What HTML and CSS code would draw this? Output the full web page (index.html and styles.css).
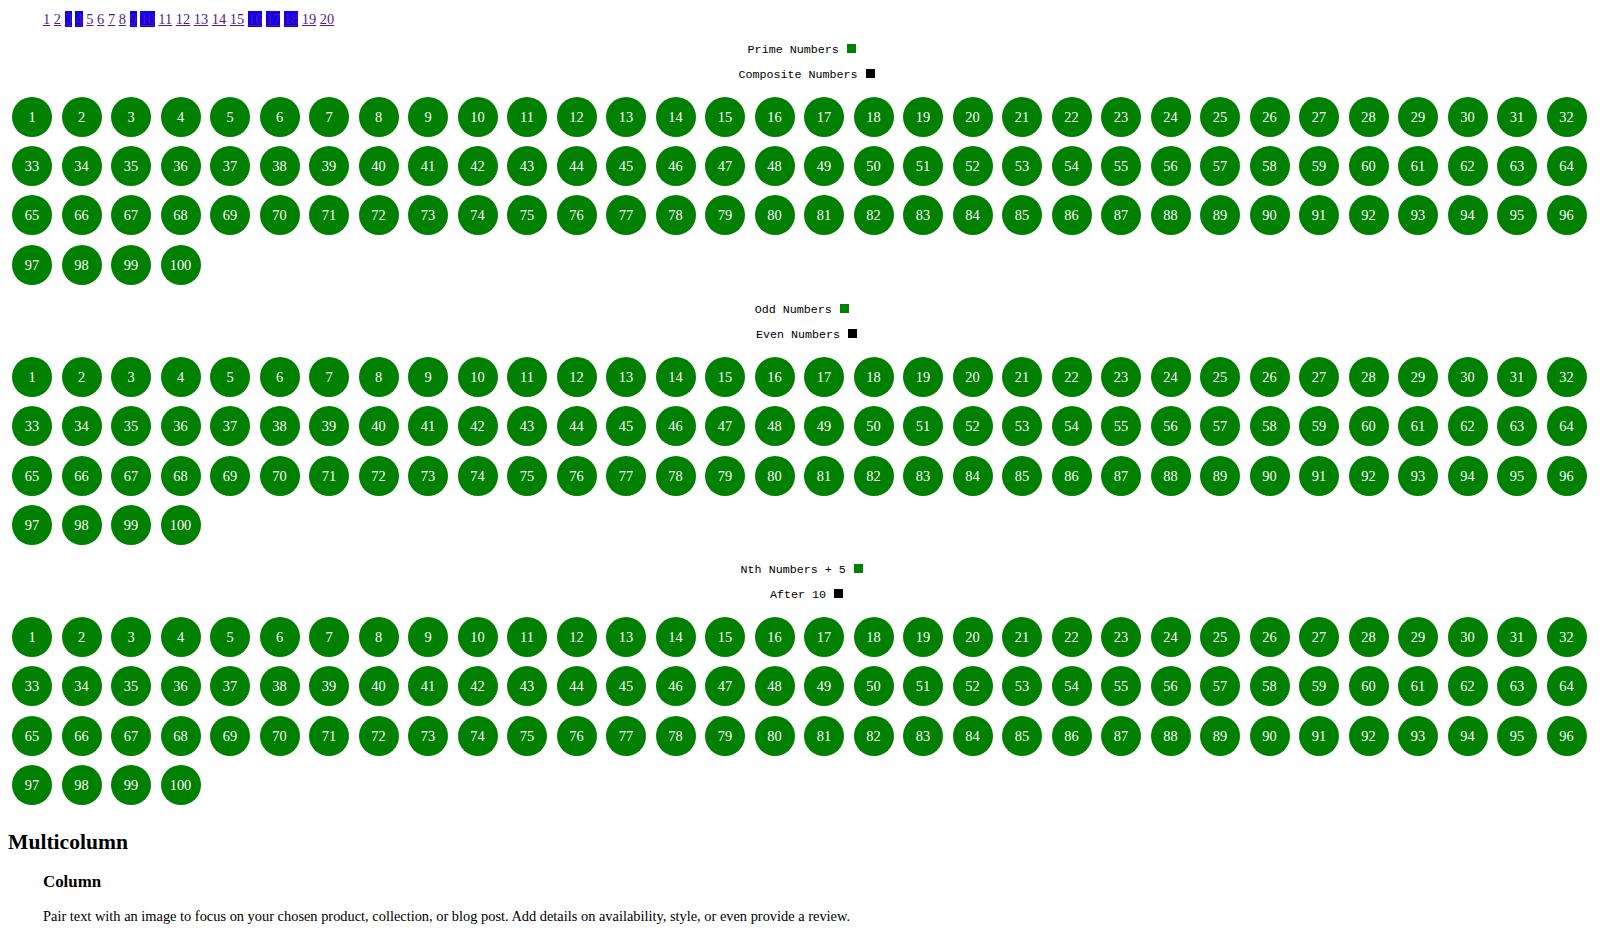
FILE: index.html
```html
<!DOCTYPE html>
<html>
<head>
<meta charset="utf-8">
<title>Numbers</title>
<link rel="stylesheet" href="styles.css">
</head>
<body>
<div class="page">
<nav class="pager"><a class="pg" href="#">1</a> <a class="pg" href="#">2</a> <a class="pg on" href="#">3</a> <a class="pg on" href="#">4</a> <a class="pg" href="#">5</a> <a class="pg" href="#">6</a> <a class="pg" href="#">7</a> <a class="pg" href="#">8</a> <a class="pg on" href="#">9</a> <a class="pg on" href="#">10</a> <a class="pg" href="#">11</a> <a class="pg" href="#">12</a> <a class="pg" href="#">13</a> <a class="pg" href="#">14</a> <a class="pg" href="#">15</a> <a class="pg on" href="#">16</a> <a class="pg on" href="#">17</a> <a class="pg on" href="#">18</a> <a class="pg" href="#">19</a> <a class="pg" href="#">20</a></nav>

<section class="block">
<div class="legend first"><span>Prime Numbers</span><i class="swatch green"></i></div>
<div class="legend"><span>Composite Numbers</span><i class="swatch black"></i></div>
<div class="dots">
<span class="dot">1</span><span class="dot">2</span><span class="dot">3</span><span class="dot">4</span><span class="dot">5</span><span class="dot">6</span><span class="dot">7</span><span class="dot">8</span><span class="dot">9</span><span class="dot">10</span>
<span class="dot">11</span><span class="dot">12</span><span class="dot">13</span><span class="dot">14</span><span class="dot">15</span><span class="dot">16</span><span class="dot">17</span><span class="dot">18</span><span class="dot">19</span><span class="dot">20</span>
<span class="dot">21</span><span class="dot">22</span><span class="dot">23</span><span class="dot">24</span><span class="dot">25</span><span class="dot">26</span><span class="dot">27</span><span class="dot">28</span><span class="dot">29</span><span class="dot">30</span>
<span class="dot">31</span><span class="dot">32</span><span class="dot">33</span><span class="dot">34</span><span class="dot">35</span><span class="dot">36</span><span class="dot">37</span><span class="dot">38</span><span class="dot">39</span><span class="dot">40</span>
<span class="dot">41</span><span class="dot">42</span><span class="dot">43</span><span class="dot">44</span><span class="dot">45</span><span class="dot">46</span><span class="dot">47</span><span class="dot">48</span><span class="dot">49</span><span class="dot">50</span>
<span class="dot">51</span><span class="dot">52</span><span class="dot">53</span><span class="dot">54</span><span class="dot">55</span><span class="dot">56</span><span class="dot">57</span><span class="dot">58</span><span class="dot">59</span><span class="dot">60</span>
<span class="dot">61</span><span class="dot">62</span><span class="dot">63</span><span class="dot">64</span><span class="dot">65</span><span class="dot">66</span><span class="dot">67</span><span class="dot">68</span><span class="dot">69</span><span class="dot">70</span>
<span class="dot">71</span><span class="dot">72</span><span class="dot">73</span><span class="dot">74</span><span class="dot">75</span><span class="dot">76</span><span class="dot">77</span><span class="dot">78</span><span class="dot">79</span><span class="dot">80</span>
<span class="dot">81</span><span class="dot">82</span><span class="dot">83</span><span class="dot">84</span><span class="dot">85</span><span class="dot">86</span><span class="dot">87</span><span class="dot">88</span><span class="dot">89</span><span class="dot">90</span>
<span class="dot">91</span><span class="dot">92</span><span class="dot">93</span><span class="dot">94</span><span class="dot">95</span><span class="dot">96</span><span class="dot">97</span><span class="dot">98</span><span class="dot">99</span><span class="dot">100</span>
</div>
</section>

<section class="block">
<div class="legend first"><span>Odd Numbers</span><i class="swatch green"></i></div>
<div class="legend"><span>Even Numbers</span><i class="swatch black"></i></div>
<div class="dots">
<span class="dot">1</span><span class="dot">2</span><span class="dot">3</span><span class="dot">4</span><span class="dot">5</span><span class="dot">6</span><span class="dot">7</span><span class="dot">8</span><span class="dot">9</span><span class="dot">10</span>
<span class="dot">11</span><span class="dot">12</span><span class="dot">13</span><span class="dot">14</span><span class="dot">15</span><span class="dot">16</span><span class="dot">17</span><span class="dot">18</span><span class="dot">19</span><span class="dot">20</span>
<span class="dot">21</span><span class="dot">22</span><span class="dot">23</span><span class="dot">24</span><span class="dot">25</span><span class="dot">26</span><span class="dot">27</span><span class="dot">28</span><span class="dot">29</span><span class="dot">30</span>
<span class="dot">31</span><span class="dot">32</span><span class="dot">33</span><span class="dot">34</span><span class="dot">35</span><span class="dot">36</span><span class="dot">37</span><span class="dot">38</span><span class="dot">39</span><span class="dot">40</span>
<span class="dot">41</span><span class="dot">42</span><span class="dot">43</span><span class="dot">44</span><span class="dot">45</span><span class="dot">46</span><span class="dot">47</span><span class="dot">48</span><span class="dot">49</span><span class="dot">50</span>
<span class="dot">51</span><span class="dot">52</span><span class="dot">53</span><span class="dot">54</span><span class="dot">55</span><span class="dot">56</span><span class="dot">57</span><span class="dot">58</span><span class="dot">59</span><span class="dot">60</span>
<span class="dot">61</span><span class="dot">62</span><span class="dot">63</span><span class="dot">64</span><span class="dot">65</span><span class="dot">66</span><span class="dot">67</span><span class="dot">68</span><span class="dot">69</span><span class="dot">70</span>
<span class="dot">71</span><span class="dot">72</span><span class="dot">73</span><span class="dot">74</span><span class="dot">75</span><span class="dot">76</span><span class="dot">77</span><span class="dot">78</span><span class="dot">79</span><span class="dot">80</span>
<span class="dot">81</span><span class="dot">82</span><span class="dot">83</span><span class="dot">84</span><span class="dot">85</span><span class="dot">86</span><span class="dot">87</span><span class="dot">88</span><span class="dot">89</span><span class="dot">90</span>
<span class="dot">91</span><span class="dot">92</span><span class="dot">93</span><span class="dot">94</span><span class="dot">95</span><span class="dot">96</span><span class="dot">97</span><span class="dot">98</span><span class="dot">99</span><span class="dot">100</span>
</div>
</section>

<section class="block">
<div class="legend first"><span>Nth Numbers + 5</span><i class="swatch green"></i></div>
<div class="legend"><span>After 10</span><i class="swatch black"></i></div>
<div class="dots">
<span class="dot">1</span><span class="dot">2</span><span class="dot">3</span><span class="dot">4</span><span class="dot">5</span><span class="dot">6</span><span class="dot">7</span><span class="dot">8</span><span class="dot">9</span><span class="dot">10</span>
<span class="dot">11</span><span class="dot">12</span><span class="dot">13</span><span class="dot">14</span><span class="dot">15</span><span class="dot">16</span><span class="dot">17</span><span class="dot">18</span><span class="dot">19</span><span class="dot">20</span>
<span class="dot">21</span><span class="dot">22</span><span class="dot">23</span><span class="dot">24</span><span class="dot">25</span><span class="dot">26</span><span class="dot">27</span><span class="dot">28</span><span class="dot">29</span><span class="dot">30</span>
<span class="dot">31</span><span class="dot">32</span><span class="dot">33</span><span class="dot">34</span><span class="dot">35</span><span class="dot">36</span><span class="dot">37</span><span class="dot">38</span><span class="dot">39</span><span class="dot">40</span>
<span class="dot">41</span><span class="dot">42</span><span class="dot">43</span><span class="dot">44</span><span class="dot">45</span><span class="dot">46</span><span class="dot">47</span><span class="dot">48</span><span class="dot">49</span><span class="dot">50</span>
<span class="dot">51</span><span class="dot">52</span><span class="dot">53</span><span class="dot">54</span><span class="dot">55</span><span class="dot">56</span><span class="dot">57</span><span class="dot">58</span><span class="dot">59</span><span class="dot">60</span>
<span class="dot">61</span><span class="dot">62</span><span class="dot">63</span><span class="dot">64</span><span class="dot">65</span><span class="dot">66</span><span class="dot">67</span><span class="dot">68</span><span class="dot">69</span><span class="dot">70</span>
<span class="dot">71</span><span class="dot">72</span><span class="dot">73</span><span class="dot">74</span><span class="dot">75</span><span class="dot">76</span><span class="dot">77</span><span class="dot">78</span><span class="dot">79</span><span class="dot">80</span>
<span class="dot">81</span><span class="dot">82</span><span class="dot">83</span><span class="dot">84</span><span class="dot">85</span><span class="dot">86</span><span class="dot">87</span><span class="dot">88</span><span class="dot">89</span><span class="dot">90</span>
<span class="dot">91</span><span class="dot">92</span><span class="dot">93</span><span class="dot">94</span><span class="dot">95</span><span class="dot">96</span><span class="dot">97</span><span class="dot">98</span><span class="dot">99</span><span class="dot">100</span>
</div>
</section>

<section class="multicolumn">
<h2 class="mc-title">Multicolumn</h2>
<div class="mc-column">
<h3 class="mc-heading">Column</h3>
<p class="mc-text">Pair text with an image to focus on your chosen product, collection, or blog post. Add details on availability, style, or even provide a review.</p>
</div>
</section>
</div>
</body>
</html>
```

FILE: styles.css
```css
html, body {
  margin: 0;
  padding: 0;
  background: #ffffff;
}

body {
  font-family: "Liberation Serif", "Times New Roman", serif;
  font-size: 14.4px;
  color: #000000;
}

.page {
  padding: 8px;
}

.pager {
  padding: 2.5px 0 0 35px;
  font-size: 14.4px;
  line-height: 16px;
  height: 16px;
  white-space: nowrap;
}

.pg {
  color: #551a8b;
  text-decoration: underline;
}

.pg.on {
  background: #1100f8;
}

.block {
  margin-top: 11px;
}

.block + .block {
  margin-top: 12.9px;
}

.legend {
  font-family: "Liberation Mono", "Courier New", monospace;
  font-size: 11.7px;
  line-height: 25.5px;
  text-align: center;
  color: #000000;
}

.legend.first {
  padding-right: 9.6px;
}

.swatch {
  display: inline-block;
  width: 9px;
  height: 9px;
  margin-left: 8px;
}

.swatch.green {
  background: #008000;
}

.swatch.black {
  background: #000000;
}

.dots {
  display: flex;
  flex-wrap: wrap;
  gap: 9.4px 9.5px;
  padding-left: 4px;
  margin-top: 8.1px;
}

.dot {
  width: 40px;
  height: 40px;
  border-radius: 50%;
  background: #008000;
  color: #ffffff;
  display: flex;
  align-items: center;
  justify-content: center;
  font-size: 14.4px;
  line-height: 16px;
}

.multicolumn {
  margin-top: 25px;
}

.mc-title {
  margin: 0 0 18px 0;
  font-size: 21.6px;
  line-height: 24px;
  font-weight: bold;
}

.mc-column {
  padding-left: 35px;
}

.mc-heading {
  margin: 0 0 17px 0;
  font-size: 16.85px;
  line-height: 19px;
  font-weight: bold;
}

.mc-text {
  margin: 0;
  font-size: 14.4px;
  line-height: 16px;
}
```
